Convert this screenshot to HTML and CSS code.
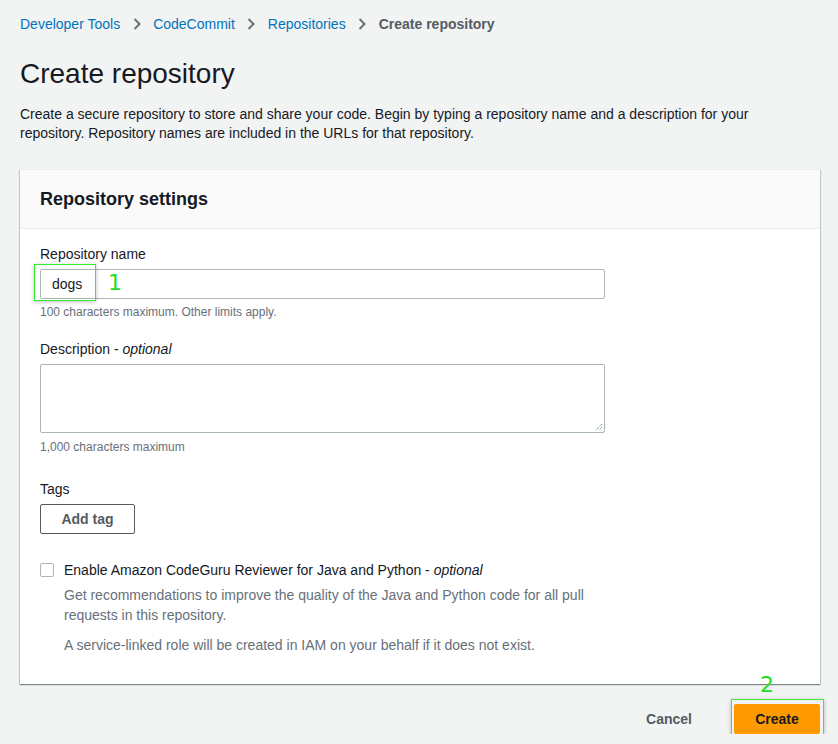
FILE: index.html
```html
<!DOCTYPE html>
<html>
<head>
<meta charset="utf-8">
<link rel="stylesheet" href="styles.css">
</head>
<body>
<div class="page">
  <nav class="crumbs">
    <a class="crumb-link">Developer Tools</a>
    <svg class="chev" width="10" height="14" viewBox="0 0 10 14"><path d="M2.5 2 L7.5 7 L2.5 12" fill="none" stroke="#687078" stroke-width="2"/></svg>
    <a class="crumb-link">CodeCommit</a>
    <svg class="chev" width="10" height="14" viewBox="0 0 10 14"><path d="M2.5 2 L7.5 7 L2.5 12" fill="none" stroke="#687078" stroke-width="2"/></svg>
    <a class="crumb-link">Repositories</a>
    <svg class="chev" width="10" height="14" viewBox="0 0 10 14"><path d="M2.5 2 L7.5 7 L2.5 12" fill="none" stroke="#687078" stroke-width="2"/></svg>
    <span class="crumb-current">Create repository</span>
  </nav>
  <h1 class="title">Create repository</h1>
  <p class="intro">Create a secure repository to store and share your code. Begin by typing a repository name and a description for your repository. Repository names are included in the URLs for that repository.</p>

  <section class="card">
    <div class="card-head">Repository settings</div>
    <div class="card-body">
      <div class="field">
        <div class="label">Repository name</div>
        <div class="input-wrap">
          <div class="input"><span class="value">dogs</span></div>
          <div class="mark mark-1"></div>
          <span class="num num-1">1</span>
        </div>
        <div class="hint hint-name">100 characters maximum. Other limits apply.</div>
      </div>
      <div class="field field-desc">
        <div class="label">Description - <i>optional</i></div>
        <div class="textarea">
          <svg class="grip" width="8" height="8" viewBox="0 0 8 8"><path d="M7 1 L1 7 M7 4 L4 7" stroke="#687078" stroke-width="1" stroke-dasharray="1 1"/></svg>
        </div>
        <div class="hint">1,000 characters maximum</div>
      </div>
      <div class="field field-tags">
        <div class="label">Tags</div>
        <button class="btn-normal">Add tag</button>
      </div>
      <div class="check-row">
        <span class="checkbox"></span>
        <div class="check-text">
          <div class="check-label">Enable Amazon CodeGuru Reviewer for Java and Python - <i>optional</i></div>
          <div class="check-desc">Get recommendations to improve the quality of the Java and Python code for all pull requests in this repository.</div>
          <div class="check-desc check-desc-2">A service-linked role will be created in IAM on your behalf if it does not exist.</div>
        </div>
      </div>
    </div>
  </section>

  <div class="actions">
    <button class="btn-link">Cancel</button>
    <div class="create-wrap">
      <span class="num num-2">2</span>
      <div class="mark mark-2"></div>
      <button class="btn-primary">Create</button>
    </div>
  </div>
</div>
</body>
</html>
```

FILE: styles.css
```css
html, body {
  margin: 0;
  padding: 0;
  background: #f2f3f3;
}
body {
  font-family: "Liberation Sans", Arial, sans-serif;
  color: #16191f;
  font-size: 14px;
}
.page {
  padding: 14px 18px 0 20px;
}
.crumbs {
  display: flex;
  align-items: center;
  gap: 11.5px;
  height: 20px;
  line-height: 20px;
}
.crumb-link {
  color: #0073bb;
}
.chev {
  display: block;
}
.crumb-current {
  color: #545b64;
  font-weight: bold;
}
.title {
  margin: 22px 0 0 0;
  font-size: 28px;
  font-weight: normal;
  line-height: 36px;
  color: #16191f;
}
.intro {
  margin: 13px 0 0 0;
  line-height: 19px;
  width: 790px;
}
.card {
  margin-top: 26px;
  width: 800px;
  background: #fff;
  box-shadow: 0 1px 1px 0 rgba(0, 28, 36, 0.3), 1px 1px 1px 0 rgba(0, 28, 36, 0.15), -1px 1px 1px 0 rgba(0, 28, 36, 0.15);
  border-top: 1px solid #eaeded;
}
.card-head {
  background: #fafafa;
  border-bottom: 1px solid #eaeded;
  padding: 0 20px;
  height: 58px;
  line-height: 58px;
  font-size: 18px;
  font-weight: bold;
  color: #16191f;
}
.card-body {
  padding: 15px 20px 29px 20px;
}
.label {
  line-height: 20px;
  color: #16191f;
}
.input-wrap {
  position: relative;
  margin-top: 5px;
  width: 565px;
}
.input {
  height: 28px;
  border: 1px solid #aab7b8;
  border-radius: 2px;
  display: flex;
  align-items: center;
  padding-left: 11px;
}
.value {
  color: #16191f;
}
.mark {
  position: absolute;
  border: 1px solid #33ee33;
  box-shadow: 0 1px 4px rgba(0, 0, 0, 0.25);
}
.mark-1 {
  left: -6px;
  top: -5px;
  width: 60px;
  height: 35px;
}
.num {
  position: absolute;
  color: #22dd22;
  font-size: 22px;
  line-height: 22px;
  font-family: "DejaVu Sans", sans-serif;
}
.num-1 {
  left: 68px;
  top: 3px;
}
.hint {
  margin-top: 6px;
  font-size: 12px;
  line-height: 16px;
  color: #687078;
}
.hint-name {
  margin-top: 5px;
}
.field-desc {
  margin-top: 19px;
}
.textarea {
  position: relative;
  margin-top: 5px;
  width: 563px;
  height: 67px;
  border: 1px solid #aab7b8;
  border-radius: 2px;
}
.grip {
  position: absolute;
  right: 1px;
  bottom: 1px;
}
.field-tags {
  margin-top: 24px;
}
.btn-normal {
  margin-top: 5px;
  font-family: inherit;
  font-size: 14px;
  font-weight: bold;
  color: #545b64;
  background: #fff;
  border: 1px solid #545b64;
  border-radius: 2px;
  width: 95px;
  height: 30px;
  padding: 0;
}
.check-row {
  display: flex;
  gap: 10px;
  margin-top: 27px;
}
.checkbox {
  width: 12px;
  height: 12px;
  border: 1px solid #aab7b8;
  border-radius: 2px;
  margin-top: 2px;
  flex: none;
}
.check-label {
  line-height: 18px;
}
.check-desc {
  color: #687078;
  line-height: 20px;
  width: 545px;
  margin-top: 6px;
}
.check-desc-2 {
  margin-top: 10px;
}
.actions {
  display: flex;
  justify-content: flex-end;
  align-items: center;
  gap: 42px;
  width: 800px;
  margin-top: 20px;
}
.btn-link {
  font-family: inherit;
  font-size: 14px;
  font-weight: bold;
  color: #545b64;
  background: none;
  border: none;
  padding: 0;
  height: 30px;
}
.create-wrap {
  position: relative;
}
.btn-primary {
  display: block;
  font-family: inherit;
  font-size: 14px;
  font-weight: bold;
  color: #16191f;
  background: #ff9900;
  border: none;
  border-radius: 2px;
  width: 86px;
  height: 30px;
  padding: 0;
}
.mark-2 {
  left: -3px;
  top: -5px;
  width: 91px;
  height: 36px;
}
.num-2 {
  left: 26px;
  top: -30px;
}
```
